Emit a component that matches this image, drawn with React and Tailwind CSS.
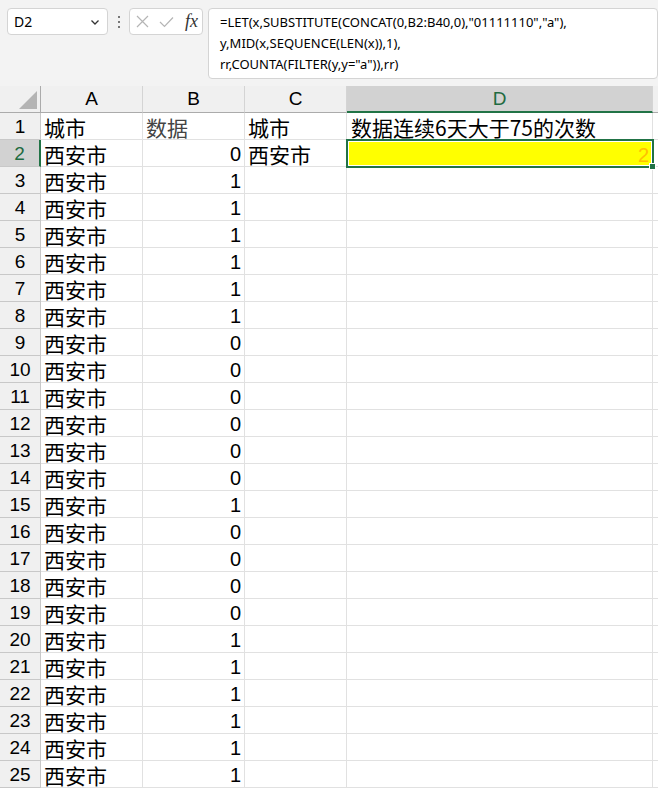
import React from "react";

const data = [0,1,1,1,1,1,1,0,0,0,0,0,0,1,0,0,0,0,1,1,1,1,1,1];
const cjk = { fontFamily: '"Noto Sans CJK SC", "Noto Sans", sans-serif' };

function Cell({ w, children, className = "" }) {
  return (
    <div className={`${w} h-full shrink-0 border-r border-b border-[#e1e1e1] flex items-center overflow-hidden whitespace-nowrap pt-[2px] leading-[22px] ${className}`}>
      {children}
    </div>
  );
}

export default function App() {
  const rows = [];
  rows.push(
    <div key="r1" className="flex h-[27px]">
      <div className="w-[41px] shrink-0 h-full bg-[#f0f0f0] border-r border-b border-[#c8c8c8] flex items-center justify-center pt-[1px] leading-[22px] text-[19px] text-black font-['Liberation_Sans',sans-serif]">1</div>
      <Cell w="w-[102px]" className="pl-[3px] text-[21px]"><span style={cjk}>城市</span></Cell>
      <Cell w="w-[102px]" className="pl-[3px] text-[21px]"><span style={cjk} className="text-[#444]">数据</span></Cell>
      <Cell w="w-[102px]" className="pl-[3px] text-[21px]"><span style={cjk}>城市</span></Cell>
      <Cell w="w-[306px]" className="pl-[4px] text-[21px]"><span style={cjk}>数据连续6天大于75的次数</span></Cell>
      <div className="flex-1 h-full border-b border-[#e1e1e1]" />
    </div>
  );
  data.forEach((v, i) => {
    const n = i + 2;
    const sel = n === 2;
    rows.push(
      <div key={n} className="flex h-[27px]">
        <div className={`w-[41px] shrink-0 h-full border-b flex items-center justify-center pt-[1px] leading-[22px] text-[19px] font-['Liberation_Sans',sans-serif] ${sel ? "bg-[#d2d2d2] text-[#1e6b41] border-r-2 border-r-[#217346] border-b-[#c8c8c8]" : "bg-[#f0f0f0] text-black border-r border-[#c8c8c8]"}`}>{n}</div>
        <Cell w="w-[102px]" className="pl-[3px] text-[21px]"><span style={cjk}>西安市</span></Cell>
        <Cell w="w-[102px]" className="justify-end pr-[3px] text-[20px] font-['Liberation_Sans',sans-serif]">{v}</Cell>
        <Cell w="w-[102px]" className="pl-[3px] text-[21px]">{sel ? <span style={cjk}>西安市</span> : null}</Cell>
        {sel ? (
          <div className="w-[306px] shrink-0 h-full relative border-r border-b border-[#e1e1e1]">
            <div className="absolute -left-[1px] -top-[1px] w-[308px] h-[29px] border-2 border-[#217346] z-10">
              <div className="w-full h-full border border-white bg-[#ffff00] flex items-center justify-end pr-[2px] pt-[2px] leading-[22px] text-[20px] text-[#ffc000] font-['Liberation_Sans',sans-serif]">2</div>
              <div className="absolute -right-[4px] -bottom-[4px] w-[7px] h-[7px] bg-[#217346] border border-white" />
            </div>
          </div>
        ) : (
          <Cell w="w-[306px]" />
        )}
        <div className="flex-1 h-full border-b border-[#e1e1e1]" />
      </div>
    );
  });

  return (
    <div className="w-[658px] h-[792px] overflow-hidden bg-white">
      {/* formula bar */}
      <div className="h-[86px] bg-[#f3f3f3] relative flex items-start pt-[8px]">
        <div className="ml-[7px] w-[101px] h-[27px] bg-white border border-[#d4d4d4] rounded-[4px] flex items-center justify-between pl-[6px] pr-[6px] text-[14px] text-black font-['Noto_Sans',sans-serif]">
          <span>D2</span>
          <svg width="12" height="12" viewBox="0 0 12 12" fill="none" stroke="#333" strokeWidth="1.3"><path d="M2.5 4.5 L6 8 L9.5 4.5" /></svg>
        </div>
        <div className="w-[21px] h-[27px] flex flex-col items-center justify-center gap-[3px]">
          <div className="w-[2px] h-[2px] bg-[#777]" />
          <div className="w-[2px] h-[2px] bg-[#777]" />
          <div className="w-[2px] h-[2px] bg-[#777]" />
        </div>
        <div className="w-[74px] h-[27px] bg-white border border-[#d4d4d4] rounded-[4px] flex items-center pl-[6px] gap-[10px]">
          <svg width="13" height="13" viewBox="0 0 13 13" fill="none" stroke="#b5b5b5" strokeWidth="1.2"><path d="M1 1 L12 12 M12 1 L1 12" /></svg>
          <svg width="15" height="12" viewBox="0 0 15 12" fill="none" stroke="#b5b5b5" strokeWidth="1.2"><path d="M1 6 L5.5 10.5 L14 1.5" /></svg>
          <span className="text-[18px] italic text-[#333] font-['Liberation_Serif',serif] leading-none -mt-[2px] ml-[1px]">fx</span>
        </div>
        <div className="ml-[5px] w-[450px] h-[71px] bg-white border border-[#d4d4d4] rounded-[4px] pl-[11px] pt-[3px] text-[13px] leading-[21px] text-black font-['Noto_Sans',sans-serif] whitespace-nowrap">
          <div>=LET(x,SUBSTITUTE(CONCAT(0,B2:B40,0),"01111110","a"),</div>
          <div>y,MID(x,SEQUENCE(LEN(x)),1),</div>
          <div>rr,COUNTA(FILTER(y,y="a")),rr)</div>
        </div>
      </div>
      {/* column headers */}
      <div className="flex h-[27px] bg-[#f0f0f0] text-[19px] leading-[22px] font-['Liberation_Sans',sans-serif]">
        <div className="w-[41px] shrink-0 h-full border-r border-b border-[#ababab] relative">
          <svg className="absolute right-[3px] bottom-[3px]" width="18" height="18" viewBox="0 0 18 18"><path d="M18 0 L18 18 L0 18 Z" fill="#b4b4b4" /></svg>
        </div>
        <div className="w-[102px] shrink-0 h-full border-r border-b border-[#ababab] border-r-[#d4d4d4] flex items-center justify-center">A</div>
        <div className="w-[102px] shrink-0 h-full border-r border-b border-[#ababab] border-r-[#d4d4d4] flex items-center justify-center">B</div>
        <div className="w-[102px] shrink-0 h-full border-r border-b border-[#ababab] border-r-[#d4d4d4] flex items-center justify-center">C</div>
        <div className="w-[306px] shrink-0 h-full bg-[#d2d2d2] border-r border-r-[#d4d4d4] border-b-2 border-b-[#217346] flex items-center justify-center text-[#1e6b41]">D</div>
        <div className="flex-1 h-full border-b border-[#ababab]" />
      </div>
      {rows}
    </div>
  );
}
